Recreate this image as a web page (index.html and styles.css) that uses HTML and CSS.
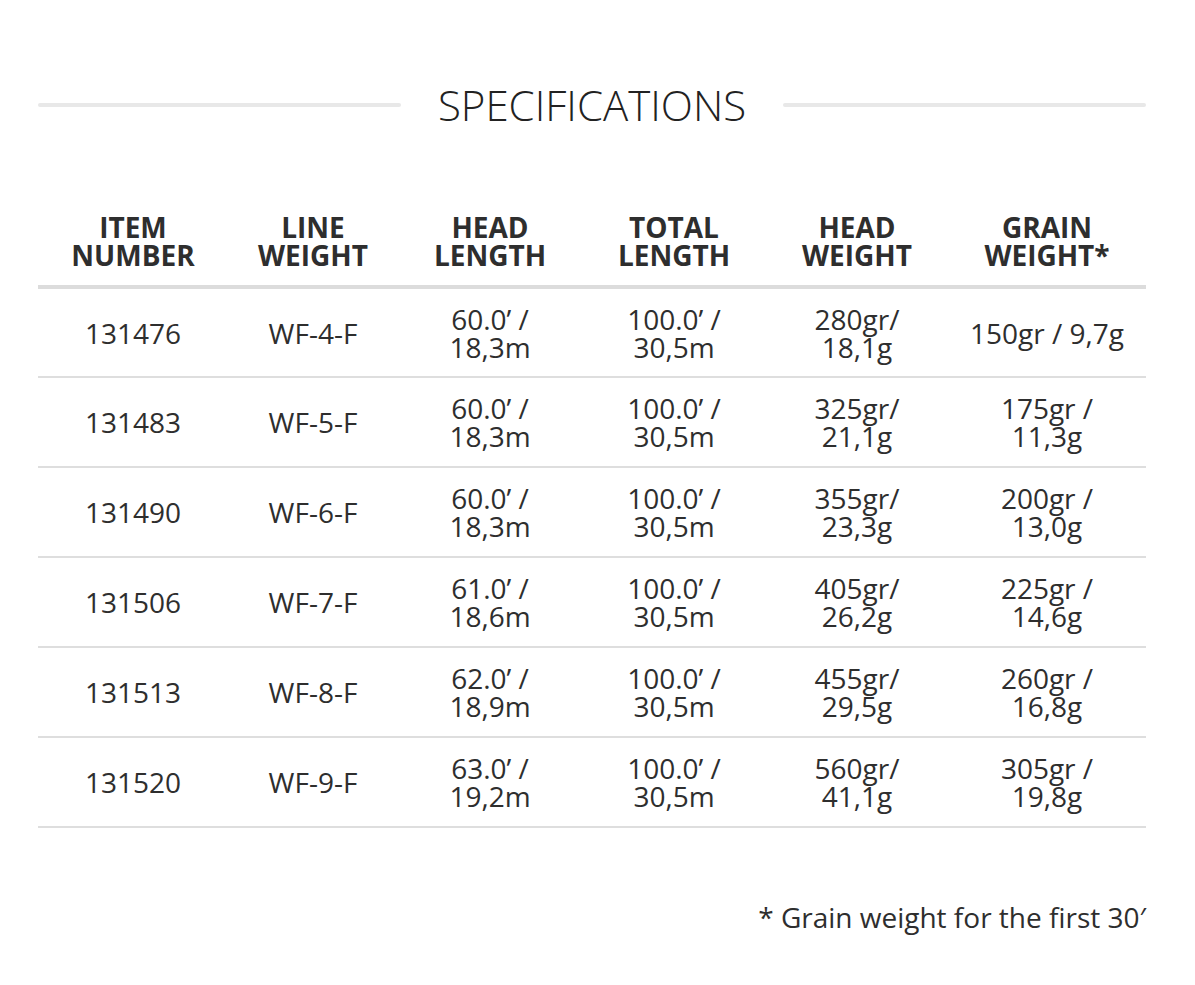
FILE: index.html
```html
<!DOCTYPE html>
<html lang="en">
<head>
<meta charset="utf-8">
<title>Specifications</title>
<link rel="stylesheet" href="styles.css">
</head>
<body>
<section class="specs">
  <div class="specs-title">
    <span class="rule"></span>
    <h2>SPECIFICATIONS</h2>
    <span class="rule"></span>
  </div>
  <table class="spec-table">
    <colgroup>
      <col class="c1"><col class="c2"><col class="c3"><col class="c4"><col class="c5"><col class="c6">
    </colgroup>
    <thead>
      <tr>
        <th>ITEM NUMBER</th>
        <th>LINE WEIGHT</th>
        <th>HEAD LENGTH</th>
        <th>TOTAL LENGTH</th>
        <th>HEAD WEIGHT</th>
        <th>GRAIN WEIGHT*</th>
      </tr>
    </thead>
    <tbody>
      <tr><td>131476</td><td>WF-4-F</td><td>60.0’ / 18,3m</td><td>100.0’ / 30,5m</td><td>280gr/ 18,1g</td><td>150gr / 9,7g</td></tr>
      <tr><td>131483</td><td>WF-5-F</td><td>60.0’ / 18,3m</td><td>100.0’ / 30,5m</td><td>325gr/ 21,1g</td><td>175gr / 11,3g</td></tr>
      <tr><td>131490</td><td>WF-6-F</td><td>60.0’ / 18,3m</td><td>100.0’ / 30,5m</td><td>355gr/ 23,3g</td><td>200gr / 13,0g</td></tr>
      <tr><td>131506</td><td>WF-7-F</td><td>61.0’ / 18,6m</td><td>100.0’ / 30,5m</td><td>405gr/ 26,2g</td><td>225gr / 14,6g</td></tr>
      <tr><td>131513</td><td>WF-8-F</td><td>62.0’ / 18,9m</td><td>100.0’ / 30,5m</td><td>455gr/ 29,5g</td><td>260gr / 16,8g</td></tr>
      <tr><td>131520</td><td>WF-9-F</td><td>63.0’ / 19,2m</td><td>100.0’ / 30,5m</td><td>560gr/ 41,1g</td><td>305gr / 19,8g</td></tr>
    </tbody>
  </table>
  <p class="note">* Grain weight for the first 30′</p>
</section>
</body>
</html>
```
FILE: styles.css
```css
html, body {
  margin: 0;
  padding: 0;
  background: #ffffff;
}
body {
  font-family: "Open Sans", "Liberation Sans", sans-serif;
  color: #2e2e2e;
}
.specs {
  width: 1108px;
  margin-left: 38px;
  padding-top: 79px;
}
.specs-title {
  display: flex;
  align-items: center;
  gap: 37px;
  height: 52px;
}
.specs-title .rule {
  flex: 1;
  height: 4px;
  background: #e8e8e8;
  border-radius: 2px;
}
.specs-title h2 {
  margin: 0;
  font-weight: 300;
  font-size: 42px;
  line-height: 52px;
  color: #222;
}
.spec-table {
  width: 100%;
  border-collapse: collapse;
  table-layout: fixed;
  margin-top: 82px;
}
.c1 { width: 190px; }
.c2 { width: 170px; }
.c3 { width: 184px; }
.c4 { width: 184px; }
.c5 { width: 182px; }
.c6 { width: 198px; }
.spec-table th {
  font-weight: 700;
  font-size: 28px;
  line-height: 28px;
  color: #2e2e2e;
  padding: 0 8px 16px;
  text-align: center;
  vertical-align: bottom;
  border-bottom: 4px solid #dcdcdc;
}
.spec-table td {
  font-size: 28px;
  line-height: 28px;
  text-align: center;
  vertical-align: middle;
  height: 90px;
  padding: 0 18px;
  box-sizing: border-box;
  border-bottom: 2px solid #dedede;
  color: #2e2e2e;
}
.note {
  margin: 70px 0 0;
  text-align: right;
  font-size: 28px;
  line-height: 38px;
  color: #2e2e2e;
}
```
